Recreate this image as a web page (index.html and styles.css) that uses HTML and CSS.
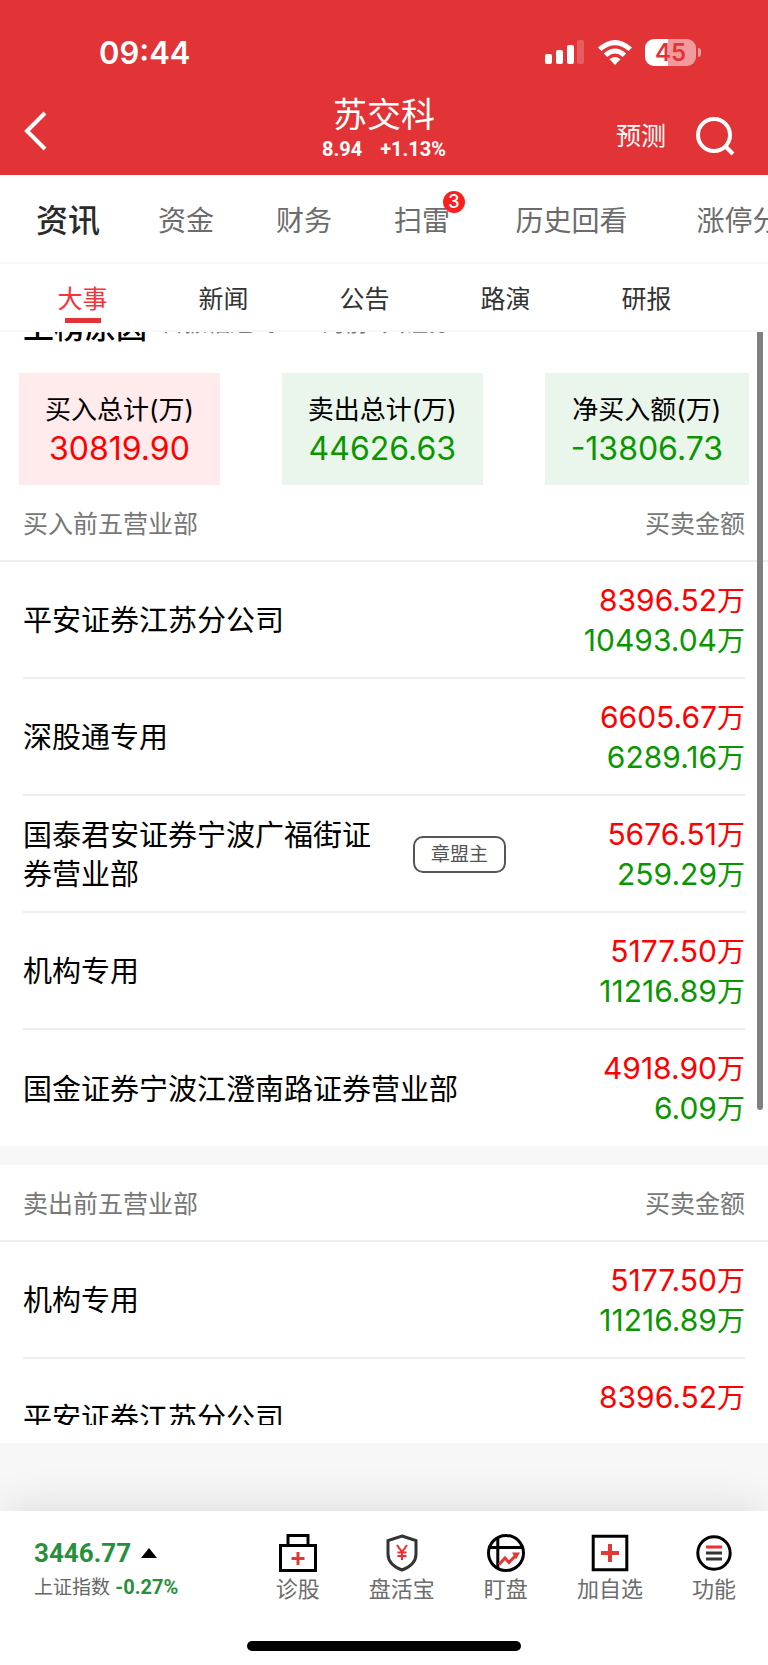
FILE: index.html
```html
<!DOCTYPE html>
<html lang="zh-CN">
<head>
<meta charset="utf-8">
<meta name="viewport" content="width=device-width, initial-scale=1">
<title>苏交科</title>
<link rel="stylesheet" href="styles.css">
</head>
<body>
<div class="app">
  <header class="top">
    <div class="status">
      <span class="clock">09:44</span>
      <div class="status-icons">
        <svg class="signal" width="40" height="26" viewBox="0 0 40 26" aria-hidden="true">
          <rect x="0" y="15" width="7" height="10" rx="2"/><rect x="11" y="11" width="7" height="14" rx="2"/>
          <rect x="22" y="6" width="7" height="19" rx="2"/><rect x="32" y="1" width="7" height="24" rx="2" opacity=".2"/>
        </svg>
        <svg class="wifi" width="36" height="26" viewBox="0 0 36 26" aria-hidden="true">
          <path d="M1 8.500Q18-6.500 35 8.500L31.600 12Q18 .5 4.400 12ZM6.800 14.400Q18 4.800 29.200 14.400L25.800 17.900Q18 11.200 10.200 17.900ZM12.500 20.200Q18 15.800 23.500 20.200L18 26Z"/>
        </svg>
        <div class="battery"><span class="battery-level">45</span></div>
      </div>
    </div>
    <div class="nav">
      <button class="back" aria-label="返回">
        <svg width="24" height="40" viewBox="0 0 24 40" aria-hidden="true"><path d="M21 2L3 20L21 38"/></svg>
      </button>
      <div class="title">
        <h1>苏交科</h1>
        <p class="quote"><span>8.94</span><span>+1.13%</span></p>
      </div>
      <div class="actions">
        <button class="forecast">预测</button>
        <button class="search" aria-label="搜索">
          <svg width="40" height="40" viewBox="0 0 40 40" aria-hidden="true"><circle cx="19" cy="19" r="16"/><path d="M30 30L38 38"/></svg>
        </button>
      </div>
    </div>
  </header>

  <nav class="tabs">
    <a class="tab tab-on" href="#">资讯</a>
    <a class="tab" href="#">资金</a>
    <a class="tab" href="#">财务</a>
    <a class="tab" href="#"><span class="badged">扫雷<span class="badge">3</span></span></a>
    <a class="tab tab-wide" href="#">历史回看</a>
    <a class="tab tab-wide" href="#">涨停分析</a>
  </nav>

  <nav class="subtabs">
    <a class="subtab subtab-on" href="#">大事</a>
    <a class="subtab" href="#">新闻</a>
    <a class="subtab" href="#">公告</a>
    <a class="subtab" href="#">路演</a>
    <a class="subtab" href="#">研报</a>
  </nav>

  <main class="pane">
    <div class="viewport">
      <div class="scrolled">
        <div class="reason"><strong>上榜原因</strong><span>日振幅达到15%的前5只证券</span></div>
        <div class="cards">
          <div class="card card-buy"><span class="card-label">买入总计(万)</span><span class="card-value">30819.90</span></div>
          <div class="card"><span class="card-label">卖出总计(万)</span><span class="card-value">44626.63</span></div>
          <div class="card"><span class="card-label">净买入额(万)</span><span class="card-value">-13806.73</span></div>
        </div>
        <section>
          <div class="list-head"><h2>买入前五营业部</h2><span>买卖金额</span></div>
          <ul class="list">
            <li class="row"><span class="name">平安证券江苏分公司</span><span class="amounts"><span class="buy">8396.52<i>万</i></span><span class="sell">10493.04<i>万</i></span></span></li>
            <li class="row"><span class="name">深股通专用</span><span class="amounts"><span class="buy">6605.67<i>万</i></span><span class="sell">6289.16<i>万</i></span></span></li>
            <li class="row"><span class="name name-tagged">国泰君安证券宁波广福街证券营业部</span><span class="tag">章盟主</span><span class="amounts"><span class="buy">5676.51<i>万</i></span><span class="sell">259.29<i>万</i></span></span></li>
            <li class="row"><span class="name">机构专用</span><span class="amounts"><span class="buy">5177.50<i>万</i></span><span class="sell">11216.89<i>万</i></span></span></li>
            <li class="row"><span class="name">国金证券宁波江澄南路证券营业部</span><span class="amounts"><span class="buy">4918.90<i>万</i></span><span class="sell">6.09<i>万</i></span></span></li>
          </ul>
        </section>
        <section class="second">
          <div class="list-head"><h2>卖出前五营业部</h2><span>买卖金额</span></div>
          <ul class="list">
            <li class="row"><span class="name">机构专用</span><span class="amounts"><span class="buy">5177.50<i>万</i></span><span class="sell">11216.89<i>万</i></span></span></li>
            <li class="row"><span class="name">平安证券江苏分公司</span><span class="amounts"><span class="buy">8396.52<i>万</i></span><span class="sell">10493.04<i>万</i></span></span></li>
          </ul>
        </section>
      </div>
    </div>
    <div class="scrollbar"></div>
  </main>

  <footer class="bottom">
    <div class="bar">
      <div class="index">
        <div class="index-value">3446.77<svg width="16" height="10" viewBox="0 0 16 10" aria-hidden="true"><path d="M8 0L16 10H0Z"/></svg></div>
        <div class="index-name">上证指数 <b>-0.27%</b></div>
      </div>
      <div class="tools">
        <button class="tool">
          <svg width="38" height="38" viewBox="0 0 38 38" aria-hidden="true"><path class="k" d="M9 11V1.500H29V11M1.500 11.500H36.500V36.500H1.500Z"/><path class="r" d="M19 18V31M12.500 24.500H25.500"/></svg>
          <span>诊股</span>
        </button>
        <button class="tool">
          <svg width="38" height="38" viewBox="0 0 38 38" aria-hidden="true"><path class="g" d="M19 2L33 6.500V20C33 28 27 33 19 36C11 33 5 28 5 20V6.500Z"/><path class="y" d="M14 11L19 18L24 11M19 18V26M14.500 18.500H23.500M14.500 22H23.500"/></svg>
          <span>盘活宝</span>
        </button>
        <button class="tool">
          <svg width="38" height="38" viewBox="0 0 38 38" aria-hidden="true"><circle class="k" cx="19" cy="19" r="17.500"/><path class="k" d="M2.500 13.500H35.500M10.800 4V34"/><path class="r" d="M12 30.500L18 24L22 28.500L30 20"/><path class="f" d="M25 18.500H33L29 25.500Z"/></svg>
          <span>盯盘</span>
        </button>
        <button class="tool">
          <svg width="38" height="38" viewBox="0 0 38 38" aria-hidden="true"><path class="k" d="M2.200 2.200H35.800V35.800H2.200Z"/><path class="r r-bold" d="M19 10V28M10 19H28"/></svg>
          <span>加自选</span>
        </button>
        <button class="tool">
          <svg width="38" height="38" viewBox="0 0 38 38" aria-hidden="true"><circle class="k" cx="19" cy="19" r="16.200"/><path class="y y-bold" d="M11 13H27"/><path class="g g-bold" d="M11 19H27M11 25H27"/></svg>
          <span>功能</span>
        </button>
      </div>
    </div>
    <div class="home"></div>
  </footer>
</div>
</body>
</html>
```
FILE: styles.css
```css
* { box-sizing: border-box; }
body, h1, h2, p, ul { margin: 0; padding: 0; }
body { font-family: Inter, "Noto Sans CJK SC", sans-serif; color: #000; background: #fff; }
ul { list-style: none; }
a { color: inherit; text-decoration: none; }
button { border: 0; padding: 0; background: none; color: inherit; font: inherit; }
svg { display: block; flex: none; }

.app { display: flex; flex-direction: column; height: 100vh; overflow: hidden; }

.top { flex: none; background: #e23437; color: #fff; }
.status { display: flex; justify-content: space-between; align-items: center; padding: 32px 67px 0 99px; height: 72px; }
.clock { padding-top: 2px; font-size: 31px; font-weight: 600; line-height: 40px; }
.status-icons { display: flex; align-items: center; gap: 12px; fill: #fff; }
.battery { position: relative; width: 51px; height: 27px; border-radius: 9px; background: linear-gradient(90deg, #fff 45%, #f09a9b 45%); text-align: center; margin-right: 5px; }
.battery::after { content: ""; position: absolute; right: -5px; top: 9px; width: 3px; height: 9px; border-radius: 0 4px 4px 0; background: #f09a9b; }
.battery-level { display: block; color: #e23437; font-size: 24px; font-weight: 600; line-height: 27px; }

.nav { display: grid; grid-template-columns: 1fr auto 1fr; align-items: center; padding: 0 33px 0 24px; height: 103px; }
.back { justify-self: start; padding-top: 14px; }
.back path, .search path, .search circle { fill: none; stroke: #fff; stroke-width: 4; }
.title { display: flex; flex-direction: column; align-items: center; padding-top: 12px; margin-left: 9px; }
.title h1 { font-size: 34px; font-weight: 400; line-height: 38px; }
.quote { display: flex; gap: 18px; font: 700 20px/30px Roboto, sans-serif; }
.actions { display: flex; align-items: center; justify-content: flex-end; gap: 29px; padding-top: 24px; }
.forecast { font-size: 25px; line-height: 36px; }

.tabs { flex: none; display: flex; align-items: center; height: 89px; padding: 4px 0 0 9px; overflow: hidden; border-bottom: 2px solid #f7f7f7; }
.tab { flex: none; width: 118px; text-align: center; color: #6c6c6c; font-size: 28px; line-height: 40px; white-space: nowrap; }
.tab-wide { width: 181px; }
.tab-on { color: #2b2b2b; font-size: 32px; font-weight: 500; }
.badged { position: relative; }
.badge { position: absolute; left: 49px; top: -13px; width: 22px; height: 22px; border-radius: 50%; background: #fb2020; color: #fff; font-size: 18px; font-weight: 500; line-height: 22px; }

.subtabs { flex: none; display: flex; height: 68px; padding: 16px 0 0 12px; border-bottom: 2px solid #f7f7f7; }
.subtab { display: flex; flex-direction: column; align-items: center; flex: 0 0 141px; color: #333; font-size: 25px; line-height: 38px; }
.subtab-on { color: #f5333a; }
.subtab-on::after { content: ""; width: 36px; height: 5px; background: #e23437; }

.pane { position: relative; flex: 1; min-height: 0; display: flex; flex-direction: column; padding-bottom: 86px; background: linear-gradient(#fff, #fff) top / 100% calc(100% - 68px) no-repeat #f7f7f7; }
.viewport { flex: 1; min-height: 0; overflow: hidden; }
.scrolled { margin-top: -34px; }
.scrollbar { position: absolute; right: 5px; top: 0; width: 6px; height: 66%; border-radius: 0 0 3px 3px; background: #808080; }

.reason { display: flex; align-items: flex-start; gap: 14px; height: 75px; padding: 0 23px; white-space: nowrap; }
.reason strong { font-size: 31px; font-weight: 500; line-height: 57px; }
.reason span { color: #777; font-size: 23px; line-height: 50px; }
.cards { display: flex; justify-content: space-between; padding: 0 19px; }
.card { display: flex; flex-direction: column; align-items: center; padding: 18px 26px 17px; background: #eaf6eb; color: #0a9600; }
.card-buy { background: #ffebec; color: #f00; }
.card-label { color: #000; font-size: 26px; line-height: 38px; }
.card-value { font-size: 32px; line-height: 39px; }

.list-head { display: flex; justify-content: space-between; align-items: center; height: 77px; padding: 2px 23px 0; border-bottom: 2px solid #eee; color: #777; font-size: 25px; line-height: 38px; }
.list-head h2 { font: inherit; }
.list { padding: 0 23px; }
.row { display: flex; align-items: center; min-height: 117px; padding-top: 2px; border-bottom: 2px solid #eee; font-size: 29px; line-height: 39px; }
.row:last-child { min-height: 116px; border-bottom: 0; }
.name-tagged { width: 352px; }
.tag { margin: 0 0 0 38px; padding: 0 16px; border: 2px solid #555; border-radius: 10px; color: #555; font-size: 19px; line-height: 33px; }
.amounts { display: flex; flex-direction: column; align-items: flex-end; margin-left: auto; font-size: 30px; }
.amounts i { font-size: 28px; font-style: normal; }
.buy { color: #f00; }
.sell { color: #0a9600; }
.second { border-top: 19px solid #f7f7f7; }

.bottom { position: relative; flex: none; height: 154px; background: #fff; box-shadow: 0 -4px 44px -6px rgba(0, 0, 0, .14); }
.bar { display: flex; height: 130px; }
.index { flex: 0 0 32%; padding: 24px 0 0 34px; white-space: nowrap; }
.index-value { display: flex; align-items: center; gap: 10px; color: #26903a; font: 700 26px/36px Roboto, sans-serif; }
.index-name { color: #666; font-size: 19px; line-height: 32px; }
.index-name b { color: #26903a; font: 700 20px/32px Roboto, sans-serif; }
.tools { flex: 1; display: grid; grid-template-columns: repeat(5, 1fr); padding-right: 2px; }
.tool { display: flex; flex-direction: column; align-items: center; padding-top: 23px; color: #6c6c6c; font-size: 22px; line-height: 34px; }
.tool path, .tool circle { fill: none; stroke-width: 3; }
.tool .k { stroke: #000; }
.tool .g { stroke: #333; }
.tool .r { stroke: #e03a35; }
.tool .y { stroke: #f52a2a; stroke-width: 2; }
.tool .f { fill: #e03a35; }
.tool .r-bold { stroke-width: 4; }
.tool .y-bold, .tool .g-bold { stroke-width: 3; }
.home { width: 274px; height: 10px; margin: 0 auto; border-radius: 5px; background: #000; }
```
